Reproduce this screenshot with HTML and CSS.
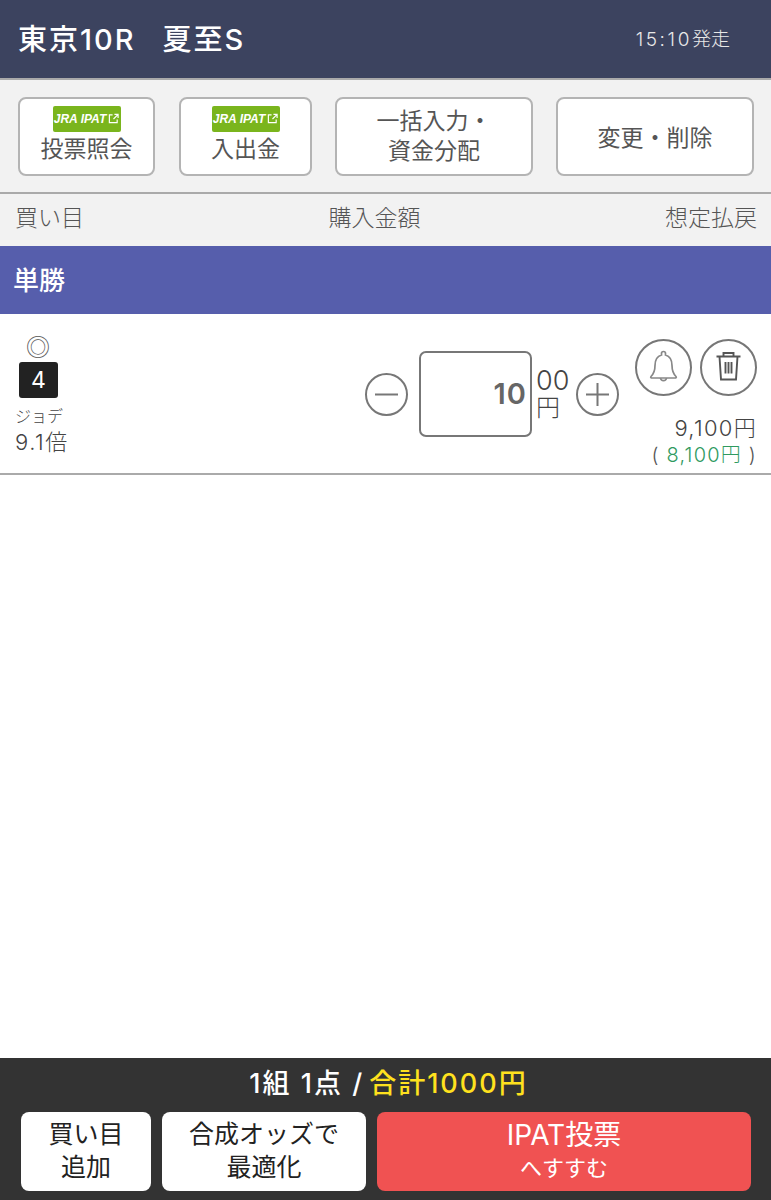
FILE: index.html
```html
<!DOCTYPE html>
<html lang="ja">
<head>
  <meta charset="utf-8">
  <title>投票</title>
  <link rel="stylesheet" href="styles.css">
</head>
<body>
  <div class="page">
    <header class="race-header">
      <h1 class="race-title"><span>東京10R</span><span>夏至S</span></h1>
      <div class="race-time"><span class="time-num">15:10</span>発走</div>
    </header>

    <div class="toolbar">
      <a class="tool-btn tool-vote">
        <span class="ipat-badge">JRA IPAT<svg class="ext-icon" viewBox="0 0 12 12"><path d="M5 2H1.500v8.500H10V7M6 6.500 10.500 2M7 1.500h4v4" fill="none" stroke="#fff" stroke-width="1.300"/></svg></span>
        <span>投票照会</span>
      </a>
      <a class="tool-btn tool-money">
        <span class="ipat-badge">JRA IPAT<svg class="ext-icon" viewBox="0 0 12 12"><path d="M5 2H1.500v8.500H10V7M6 6.500 10.500 2M7 1.500h4v4" fill="none" stroke="#fff" stroke-width="1.300"/></svg></span>
        <span>入出金</span>
      </a>
      <a class="tool-btn tool-bulk"><span>一括入力・</span><span>資金分配</span></a>
      <a class="tool-btn tool-edit">変更・削除</a>
    </div>

    <div class="col-header">
      <span>買い目</span>
      <span>購入金額</span>
      <span>想定払戻</span>
    </div>

    <div class="bet-type">単勝</div>

    <div class="bet-row">
      <div class="bet-horse">
        <div class="mark">◎</div>
        <div class="horse-num">4</div>
        <div class="horse-name">ジョデ</div>
        <div class="horse-odds">9.1倍</div>
      </div>

      <div class="stepper">
        <button class="round-btn step-btn">
          <svg viewBox="0 0 39 39"><path d="M8 19.500h23" stroke="#777" stroke-width="2"/></svg>
        </button>
        <div class="amount-box">10</div>
        <div class="amount-unit"><span>00</span><span class="unit-yen">円</span></div>
        <button class="round-btn step-btn">
          <svg viewBox="0 0 39 39"><path d="M8 19.500h23M19.500 8v23" stroke="#777" stroke-width="2"/></svg>
        </button>
      </div>

      <div class="bet-payout">
        <div class="icon-btns">
          <button class="round-btn icon-btn">
            <svg viewBox="0 0 53 53"><path d="M14 35.500c3-3 4-6 4-11 0-6 3-9.500 6.500-10.500V12.500a2 2 0 0 1 4 0V14c3.500 1 6.500 4.500 6.500 10.500 0 5 1 8 4 11 .8 1-.2 1.500-1 1.500H15c-.8 0-1.800-.5-1-1.500Z" fill="none" stroke="#888" stroke-width="1.700"/><path d="M23.500 37c.5 3.500 5.500 3.500 6 0" fill="none" stroke="#888" stroke-width="1.700"/></svg>
          </button>
          <button class="round-btn icon-btn">
            <svg viewBox="0 0 53 53"><path d="M14.500 15.500h24M21.500 15.500V12h10v3.500M17.500 15.500 19 38.500h15l1.500-23M23.500 21v11.500M26.500 21v11.500M29.500 21v11.500" fill="none" stroke="#555" stroke-width="1.900"/></svg>
          </button>
        </div>
        <div class="payout">9,100円</div>
        <div class="profit">( <span class="profit-val">8,100円</span> )</div>
      </div>
    </div>

    <div class="spacer"></div>

    <footer class="summary">
      <div class="summary-text">1組 1点 /<span class="summary-total">合計1000円</span></div>
      <div class="summary-btns">
        <a class="foot-btn foot-add"><span>買い目</span><span>追加</span></a>
        <a class="foot-btn foot-opt"><span>合成オッズで</span><span>最適化</span></a>
        <a class="foot-btn foot-ipat"><span class="ipat-main">IPAT投票</span><span class="ipat-sub">へすすむ</span></a>
      </div>
    </footer>
  </div>
</body>
</html>
```
FILE: styles.css
```css
* {
  box-sizing: border-box;
}

body {
  margin: 0;
  font-family: Inter, "Noto Sans CJK JP", sans-serif;
  color: #555;
}

.page {
  display: flex;
  flex-direction: column;
  height: 1200px;
  background-color: #fff;
}

/* ヘッダー */
.race-header {
  display: flex;
  align-items: center;
  justify-content: space-between;
  height: 80px;
  padding: 0 41px 4px 18px;
  background-color: #3c435f;
  border-bottom: 2px solid #aaa;
}

.race-title {
  display: flex;
  gap: 27px;
  margin: 0;
  font-size: 29px;
  font-weight: 500;
  letter-spacing: 2px;
  color: #fff;
}

.race-time {
  font-size: 19px;
  font-weight: 300;
  color: #e8e8e8;
}

.time-num {
  letter-spacing: 2.600px;
}

/* ボタン列 */
.toolbar {
  display: flex;
  height: 114px;
  padding: 17px 0 0 18px;
  background-color: #f2f2f2;
  border-bottom: 2px solid #aaa;
}

.tool-btn {
  display: flex;
  flex-direction: column;
  align-items: center;
  justify-content: center;
  height: 79px;
  padding-bottom: 4px;
  font-size: 23px;
  line-height: 30px;
  background-color: #fff;
  border: 2px solid #b4b4b4;
  border-radius: 8px;
}

.tool-vote {
  width: 137px;
  margin-right: 24px;
}

.tool-money {
  width: 133px;
  margin-right: 23px;
}

.tool-bulk {
  width: 198px;
  margin-right: 23px;
  padding-bottom: 2px;
}

.tool-edit {
  width: 198px;
  padding: 2px 0 0;
}

.ipat-badge {
  display: flex;
  align-items: center;
  justify-content: center;
  gap: 2px;
  width: 68px;
  height: 26px;
  margin-bottom: 2px;
  font-family: "Liberation Sans", sans-serif;
  font-size: 12px;
  font-style: italic;
  font-weight: 700;
  color: #fff;
  background-color: #7ab51d;
  border-radius: 2px;
}

.ext-icon {
  width: 11px;
  height: 11px;
}

/* 見出し */
.col-header {
  display: flex;
  justify-content: space-between;
  height: 52px;
  padding: 8px 14px 0 15px;
  font-size: 23px;
  line-height: 32px;
  font-weight: 300;
  background-color: #f2f2f2;
}

.bet-type {
  height: 68px;
  padding: 1px 0 0 13px;
  font-size: 26px;
  font-weight: 500;
  line-height: 67px;
  color: #fff;
  background-color: #565eac;
}

/* 買い目 */
.bet-row {
  display: flex;
  height: 161px;
  border-bottom: 2px solid #aaa;
}

.bet-horse {
  flex: 1;
  padding: 20px 0 0 15px;
}

.mark {
  width: 46px;
  font-size: 24px;
  line-height: 28px;
  font-weight: 300;
  text-align: center;
  color: #555;
}

.horse-num {
  width: 39px;
  height: 36px;
  margin-left: 4px;
  font-size: 23px;
  font-weight: 400;
  line-height: 36px;
  text-align: center;
  color: #fff;
  background-color: #222;
  border-radius: 3px;
}

.horse-name {
  margin-top: 5px;
  font-size: 16px;
  line-height: 26px;
  font-weight: 300;
  color: #444;
}

.horse-odds {
  font-size: 22px;
  line-height: 26px;
  font-weight: 300;
  letter-spacing: 1.500px;
  color: #444;
}

.stepper {
  display: flex;
  flex-shrink: 0;
  align-items: center;
  height: 86px;
  margin-top: 37px;
}

.round-btn {
  flex-shrink: 0;
  padding: 0;
  background-color: #fff;
  border: 2px solid #777;
  border-radius: 50%;
}

.round-btn svg {
  display: block;
  width: 100%;
  height: 100%;
}

.step-btn {
  width: 43px;
  height: 43px;
}

.amount-box {
  width: 113px;
  height: 86px;
  margin-left: 11px;
  padding-right: 3px;
  font-size: 29px;
  font-weight: 600;
  line-height: 82px;
  letter-spacing: 1px;
  text-align: right;
  color: #666;
  border: 2px solid #777;
  border-radius: 7px;
}

.amount-unit {
  display: flex;
  flex-direction: column;
  width: 44px;
  padding-left: 4px;
  font-size: 27px;
  line-height: 27px;
  font-weight: 300;
  color: #444;
}

.unit-yen {
  font-size: 24px;
}

.bet-payout {
  flex-shrink: 0;
  width: 152px;
  padding: 25px 14px 0 0;
  text-align: right;
}

.icon-btns {
  display: flex;
  justify-content: flex-end;
  gap: 8px;
  margin-bottom: 18px;
}

.icon-btn {
  width: 57px;
  height: 57px;
}

.payout {
  font-size: 22px;
  line-height: 28px;
  font-weight: 300;
  letter-spacing: 1.300px;
  color: #444;
  white-space: nowrap;
}

.profit {
  font-size: 20px;
  line-height: 27px;
  font-weight: 300;
  letter-spacing: 1.200px;
  white-space: nowrap;
}

.profit-val {
  color: #2f9a5f;
}

.spacer {
  flex: 1;
}

/* フッター */
.summary {
  height: 142px;
  background-color: #333;
}

.summary-text {
  height: 54px;
  padding-left: 6px;
  font-size: 27px;
  font-weight: 500;
  line-height: 51px;
  letter-spacing: 2px;
  text-align: center;
  color: #fff;
}

.summary-total {
  margin-left: 5px;
  color: #ffe11e;
}

.summary-btns {
  display: flex;
  gap: 11px;
  padding-left: 21px;
}

.foot-btn {
  display: flex;
  flex-direction: column;
  align-items: center;
  justify-content: center;
  height: 79px;
  padding-bottom: 1px;
  font-size: 25px;
  line-height: 33px;
  color: #222;
  background-color: #fff;
  border-radius: 8px;
}

.foot-add {
  width: 130px;
}

.foot-opt {
  width: 204px;
}

.foot-ipat {
  width: 374px;
  padding-top: 2px;
  color: #fff;
  background-color: #f05252;
}

.ipat-main {
  font-size: 28px;
}

.ipat-sub {
  font-size: 22px;
}
```
